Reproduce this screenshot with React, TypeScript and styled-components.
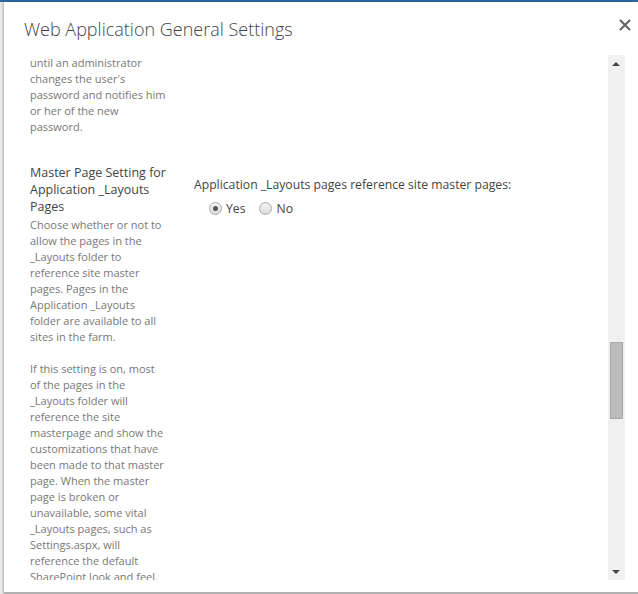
import React from "react";
import styled, { createGlobalStyle } from "styled-components";

const Global = createGlobalStyle`
  html, body { margin: 0; padding: 0; }
  body { background: #e9e9e9; width: 638px; height: 594px; overflow: hidden; font-family: "Open Sans", "Noto Sans", sans-serif; }
`;

const Page = styled.div`
  width: 638px; height: 594px; border-top: 2px solid #2a6aa0; box-sizing: border-box;
  display: flex; padding-left: 4px;
`;
const Dialog = styled.div`
  flex: 1; height: 590px; background: #fff; border-bottom: 2px solid #b0b0b0;
  box-shadow: -1px 0 2px rgba(0,0,0,0.25);
  display: flex; flex-direction: column; position: relative;
`;
const Header = styled.div`
  height: 53px; display: flex; align-items: flex-start; padding: 15px 0 0 20px; box-sizing: border-box;
`;
const Title = styled.h1`
  margin: 0; font-weight: 300; font-size: 18px; color: #444; letter-spacing: 0;
`;
const Close = styled.div`
  position: absolute; right: 6px; top: 13px; width: 14px; height: 14px;
`;
const Body = styled.div`
  display: flex; height: 525px; overflow: hidden;
`;
const Content = styled.div`
  flex: 1; display: flex; padding-left: 26px; overflow: hidden;
`;
const LeftCol = styled.div`
  width: 164px; flex: none; padding-top: 0;
`;
const Desc = styled.div<{ $mt?: number }>`
  font-size: 11px; line-height: 16px; color: #777; margin-top: ${p => p.$mt || 0}px; white-space: nowrap;
`;
const Heading = styled.div`
  font-size: 12.5px; line-height: 17px; color: #444; margin-top: 29px; white-space: nowrap;
`;
const RightCol = styled.div`
  padding-top: 122px;
`;
const Label = styled.div`
  font-size: 12.2px; line-height: 16px; color: #444; white-space: nowrap;
`;
const Radios = styled.div`
  display: flex; gap: 14px; padding-left: 15px; margin-top: 7px; align-items: center;
`;
const Opt = styled.label`
  display: flex; align-items: center; gap: 4px; font-size: 12.2px; color: #444;
`;
const Radio = styled.span<{ $on?: boolean }>`
  width: 11px; height: 11px; border-radius: 50%; border: 1px solid #a8a8a8;
  background: linear-gradient(#f4f4f4, #dcdcdc); display: inline-flex; align-items: center; justify-content: center;
  &::after { content: ""; width: 5px; height: 5px; border-radius: 50%; background: ${p => p.$on ? "#555" : "transparent"}; }
`;
const Scroll = styled.div`
  width: 17px; margin-right: 13px; background: #f0f0f0; display: flex; flex-direction: column; align-items: center; position: relative;
`;
const Thumb = styled.div`
  position: absolute; left: 2px; top: 287px; width: 11px; height: 75px; background: #bcbcbc; border: 1px solid #a8a8a8;
`;
const Arrow = styled.div<{ $down?: boolean }>`
  position: absolute; left: 4px; ${p => p.$down ? "bottom: 6px;" : "top: 7px;"}
  width: 0; height: 0; border-left: 4px solid transparent; border-right: 4px solid transparent;
  ${p => p.$down ? "border-top: 4px solid #444;" : "border-bottom: 4px solid #444;"}
`;

const L = (lines: string[]) => lines.map((t, i) => <div key={i}>{t}</div>);

export default function App() {
  return (
    <>
      <Global />
      <Page>
        <Dialog>
          <Header><Title>Web Application General Settings</Title></Header>
          <Close>
            <svg width="14" height="14" viewBox="0 0 14 14"><path d="M2 2L12 12M12 2L2 12" stroke="#666" strokeWidth="2.2" /></svg>
          </Close>
          <Body>
            <Content>
              <LeftCol>
                <Desc>{L(["until an administrator", "changes the user's", "password and notifies him", "or her of the new", "password."])}</Desc>
                <Heading>{L(["Master Page Setting for", "Application _Layouts", "Pages"])}</Heading>
                <Desc $mt={2}>{L(["Choose whether or not to", "allow the pages in the", "_Layouts folder to", "reference site master", "pages. Pages in the", "Application _Layouts", "folder are available to all", "sites in the farm."])}</Desc>
                <Desc $mt={16}>{L(["If this setting is on, most", "of the pages in the", "_Layouts folder will", "reference the site", "masterpage and show the", "customizations that have", "been made to that master", "page. When the master", "page is broken or", "unavailable, some vital", "_Layouts pages, such as", "Settings.aspx, will", "reference the default", "SharePoint look and feel."])}</Desc>
              </LeftCol>
              <RightCol>
                <Label>Application _Layouts pages reference site master pages:</Label>
                <Radios>
                  <Opt><Radio $on />Yes</Opt>
                  <Opt><Radio />No</Opt>
                </Radios>
              </RightCol>
            </Content>
            <Scroll>
              <Arrow />
              <Thumb />
              <Arrow $down />
            </Scroll>
          </Body>
        </Dialog>
      </Page>
    </>
  );
}
